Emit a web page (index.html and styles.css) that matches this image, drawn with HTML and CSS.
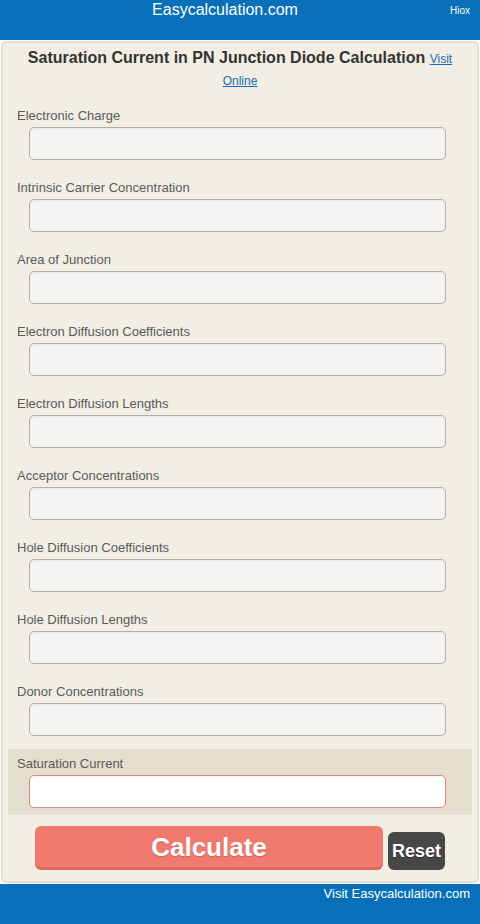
FILE: index.html
```html
<!DOCTYPE html>
<html>
<head>
<meta charset="utf-8">
<link rel="stylesheet" href="styles.css">
</head>
<body>
<header class="top">
  <div class="brand">Easycalculation.com</div>
  <div class="hiox">Hiox</div>
</header>
<main class="card">
  <h1 class="title">Saturation Current in PN Junction Diode Calculation <a href="#" class="visit">Visit</a> <a href="#" class="visit">Online</a></h1>
  <div class="row"><label class="lbl">Electronic Charge</label><input class="field" type="text"></div>
  <div class="row"><label class="lbl">Intrinsic Carrier Concentration</label><input class="field" type="text"></div>
  <div class="row"><label class="lbl">Area of Junction</label><input class="field" type="text"></div>
  <div class="row"><label class="lbl">Electron Diffusion Coefficients</label><input class="field" type="text"></div>
  <div class="row"><label class="lbl">Electron Diffusion Lengths</label><input class="field" type="text"></div>
  <div class="row"><label class="lbl">Acceptor Concentrations</label><input class="field" type="text"></div>
  <div class="row"><label class="lbl">Hole Diffusion Coefficients</label><input class="field" type="text"></div>
  <div class="row"><label class="lbl">Hole Diffusion Lengths</label><input class="field" type="text"></div>
  <div class="row"><label class="lbl">Donor Concentrations</label><input class="field" type="text"></div>
  <div class="row result"><label class="lbl">Saturation Current</label><input class="field out" type="text"></div>
  <div class="actions">
    <button class="calc">Calculate</button>
    <button class="reset">Reset</button>
  </div>
</main>
<footer class="bottom">Visit Easycalculation.com</footer>
</body>
</html>
```
FILE: styles.css
```css
html, body {
  margin: 0;
  padding: 0;
  background: #ffffff;
  font-family: "Liberation Sans", Arial, sans-serif;
}
.top {
  height: 40px;
  background: #0870b8;
  color: #fff;
  display: flex;
  align-items: flex-start;
}
.brand {
  width: 450px;
  text-align: center;
  font-size: 16px;
  line-height: 20px;
}
.hiox {
  flex: 1;
  text-align: right;
  padding-right: 10px;
  font-size: 10px;
  line-height: 22px;
}
.card {
  margin: 1px;
  border: 2px solid #e2ded1;
  border-radius: 5px;
  background: #f2eee3;
  padding: 4px 5px 11px 5px;
  height: 842px;
  box-sizing: border-box;
}
.title {
  margin: 0 0 10px 0;
  padding: 0 12px;
  font-size: 16px;
  font-weight: bold;
  color: #333;
  text-align: center;
  line-height: 22px;
}
.visit {
  font-size: 12px;
  line-height: 14px;
  font-weight: normal;
  color: #1b6cb5;
  text-decoration: underline;
}
.row {
  display: flex;
  flex-direction: column;
  padding: 7px 26px 7px 9px;
  margin-bottom: 6px;
}
.lbl {
  font-size: 13px;
  line-height: 16px;
  color: #5a5a5a;
  margin-bottom: 3px;
}
.field {
  margin-left: 12px;
  height: 33px;
  box-sizing: border-box;
  border: 1px solid #b3b0aa;
  border-radius: 5px;
  background: #f5f4f2;
  box-shadow: inset 0 1px 2px rgba(0,0,0,0.06);
  font-size: 14px;
  padding: 0 8px;
}
.result {
  background: #e4dece;
  margin-bottom: 11px;
}
.field.out {
  background: #fff;
  border-color: #e6877e;
  box-shadow: inset 0 1px 2px rgba(0,0,0,0.05);
}
.actions {
  display: flex;
  align-items: flex-end;
  padding-left: 27px;
  gap: 5px;
}
.calc {
  width: 348px;
  height: 44px;
  background: #f07a6d;
  border: none;
  border-bottom: 3px solid #dc6860;
  border-radius: 6px;
  color: #fff;
  font-family: "Liberation Sans", Arial, sans-serif;
  font-weight: bold;
  font-size: 26px;
  line-height: 36px;
  padding: 0;
  text-shadow: 0 1px 1px rgba(0,0,0,0.2);
}
.reset {
  width: 57px;
  height: 38px;
  background: #474747;
  border: none;
  border-radius: 6px;
  color: #fff;
  font-family: "Liberation Sans", Arial, sans-serif;
  font-weight: bold;
  font-size: 18px;
  padding: 0;
  text-shadow: 0 1px 1px rgba(0,0,0,0.4);
}
.bottom {
  height: 40px;
  background: #0870b8;
  color: #fff;
  font-size: 13px;
  line-height: 20px;
  text-align: right;
  padding-right: 10px;
}
```
